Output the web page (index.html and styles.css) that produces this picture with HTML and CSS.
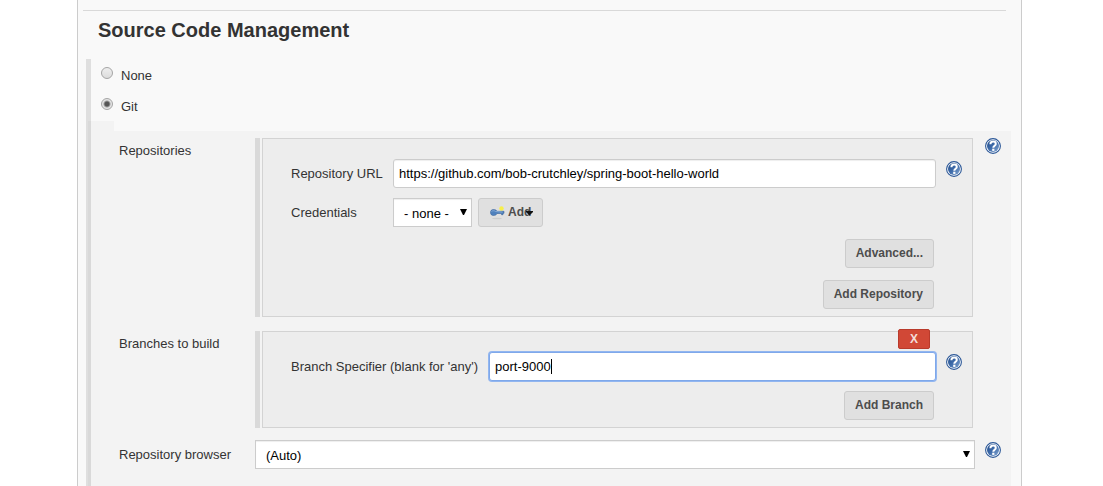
FILE: index.html
```html
<!DOCTYPE html>
<html lang="en">
<head>
<meta charset="utf-8">
<title>Source Code Management</title>
<link rel="stylesheet" href="styles.css">
</head>
<body>
<svg class="defs" aria-hidden="true">
  <defs>
    <linearGradient id="blue" x1="0" y1="0" x2="1" y2="1">
      <stop offset="0" stop-color="#204a87"/>
      <stop offset="0.5" stop-color="#3f6cab"/>
      <stop offset="1" stop-color="#88a8d0"/>
    </linearGradient>
    <symbol id="help" viewBox="0 0 16 16">
      <circle cx="8" cy="8" r="7.4" fill="#fff" stroke="#2b5797" stroke-width="1.1"/>
      <circle cx="8" cy="8" r="6" fill="url(#blue)"/>
      <path d="M5.400 6.200C5.400 4.300 6.500 3.600 8.100 3.600c1.700 0 2.700.9 2.700 2.300 0 1.700-2.500 1.900-2.500 3.800" fill="none" stroke="#fff" stroke-width="2"/>
      <rect x="7.200" y="10.700" width="2.200" height="2.200" fill="#fff"/>
    </symbol>
    <symbol id="arrow" viewBox="0 0 7 6">
      <path d="M0 0h7L4 6H3z" fill="#000"/>
    </symbol>
  </defs>
</svg>
<main class="config">
  <hr class="rule">
  <h1 class="title">Source Code Management</h1>
  <form class="scm">
    <label class="choice"><input class="radio" type="radio" name="scm"><span>None</span></label>
    <label class="choice"><input class="radio" type="radio" name="scm" checked><span>Git</span></label>
    <div class="git">
      <div class="tab"></div>
      <div class="settings">
        <section class="setting">
          <h2 class="name">Repositories</h2>
          <div class="repeat">
            <div class="box box-repo">
              <div class="field">
                <label class="caption" for="url">Repository URL</label>
                <input class="text" id="url" type="text" value="https://github.com/bob-crutchley/spring-boot-hello-world">
                <button class="help" type="button" aria-label="Help for Repository URL"><svg><use href="#help"/></svg></button>
              </div>
              <div class="field">
                <label class="caption" for="credentials">Credentials</label>
                <div class="credentials">
                  <div class="pick pick-small">
                    <select class="select" id="credentials"><option>- none -</option></select>
                    <svg class="arrow"><use href="#arrow"/></svg>
                  </div>
                  <button class="button add" type="button">
                    <svg class="key" viewBox="0 0 16 16">
                      <ellipse cx="8" cy="14.500" rx="5" ry=".8" fill="#cdcdcd"/>
                      <circle cx="12.500" cy="4.500" r="2.200" fill="#f7ef4a"/>
                      <path d="M4.500 5.500c2 0 3 .8 3.500 1.800H15v2h-1v1.400h-1.500V9.500H8C7.500 10.800 6.300 11.500 4.500 11.500 2.400 11.500 1.500 10.200 1.500 8.500s.9-3 3-3z" fill="#4f81bd" stroke="#3b659c" stroke-width=".6"/>
                      <path d="M2.500 7.500c1-1 3-1 4 0l7 .6" fill="none" stroke="#86aad6"/>
                    </svg>
                    <span>Add</span>
                    <svg class="menu" viewBox="0 0 7 6"><path d="M0 1h7v1L4 5H3L0 2z" fill="#111"/></svg>
                  </button>
                </div>
              </div>
              <div class="actions"><button class="button" type="button">Advanced...</button></div>
              <div class="actions"><button class="button" type="button">Add Repository</button></div>
            </div>
          </div>
          <button class="help" type="button" aria-label="Help for Repositories"><svg><use href="#help"/></svg></button>
        </section>
        <section class="setting">
          <h2 class="name">Branches to build</h2>
          <div class="repeat">
            <div class="box box-branch">
              <button class="delete" type="button">X</button>
              <div class="field field-wide">
                <label class="caption" for="branch">Branch Specifier (blank for 'any')</label>
                <div class="editing">
                  <input class="text text-focus" id="branch" type="text" value="port-9000">
                  <span class="caret"></span>
                </div>
                <button class="help" type="button" aria-label="Help for Branch Specifier"><svg><use href="#help"/></svg></button>
              </div>
              <div class="actions"><button class="button" type="button">Add Branch</button></div>
            </div>
          </div>
        </section>
        <section class="setting">
          <label class="name" for="browser">Repository browser</label>
          <div class="pick pick-wide">
            <select class="select" id="browser"><option>(Auto)</option></select>
            <svg class="arrow"><use href="#arrow"/></svg>
          </div>
          <button class="help help-low" type="button" aria-label="Help for Repository browser"><svg><use href="#help"/></svg></button>
        </section>
      </div>
    </div>
  </form>
</main>
</body>
</html>
```
FILE: styles.css
```css
* { box-sizing: border-box; }

body {
  margin: 0;
  background: #fff;
  color: #333;
  font: 13px/18px "Liberation Sans", Arial, sans-serif;
}

.defs { position: absolute; width: 0; height: 0; }

.config {
  display: flex;
  flex-direction: column;
  min-height: 100vh;
  margin: 0 81px 0 77px;
  padding-top: 10px;
  border: solid #ccc;
  border-width: 0 1px;
  background: #f9f9f9;
}

.rule {
  align-self: stretch;
  height: 1px;
  margin: 0 15px 0 5px;
  border: 0;
  background: #d9d9d9;
}

.title {
  margin: 7px 20px 17px;
  font-size: 20px;
  line-height: 24px;
}

.scm {
  display: flex;
  flex: 1;
  flex-direction: column;
  margin: 0 10px 0 8px;
  border-left: 5px solid #dfdfdf;
}

.choice {
  display: flex;
  gap: 8px;
  height: 31px;
  padding: 8px 0 0 10px;
}

.radio {
  appearance: none;
  width: 12px;
  height: 12px;
  margin: 0;
  border: 1px solid #a5a5a5;
  border-radius: 50%;
  background: linear-gradient(#eee, #dcdcdc);
}

.radio:checked { background: radial-gradient(circle, #555 0 2px, #e4e4e4 4px); }

.git {
  display: flex;
  flex: 1;
  flex-direction: column;
  margin-left: -3px;
  border-left: 3px solid #d9d9d9;
}

.tab { width: 23px; height: 10px; background: #f3f3f3; }

.settings {
  display: flex;
  flex: 1;
  flex-direction: column;
  gap: 14px;
  padding: 7px 10px 17px 28px;
  background: #f3f3f3;
}

.setting {
  display: grid;
  grid-template-columns: 136px 1fr 16px;
  align-items: start;
}

.setting:last-child { margin-top: -2px; }

.name {
  margin: 0;
  padding-top: 4px;
  font-size: 13px;
  font-weight: normal;
}

.setting:last-child .name { padding-top: 6px; }

.repeat {
  margin-right: 12px;
  padding-left: 2px;
  border-left: 5px solid #d9d9d9;
}

.box {
  position: relative;
  display: flex;
  flex-direction: column;
  gap: 10px;
  padding: 20px 10px 7px 28px;
  border: 1px solid #d3d3d3;
  background: #ededed;
}

.box-repo .actions { margin-top: 2px; }

.field {
  display: grid;
  grid-template-columns: 102px 1fr 16px;
  align-items: start;
}

.field-wide { grid-template-columns: 198px 1fr 16px; }

.caption { padding-top: 6px; }

.text {
  display: block;
  height: 29px;
  margin-right: 10px;
  padding: 0 5px;
  border: 1px solid #ccc;
  border-radius: 3px;
  outline: 0;
  background: #fff;
  box-shadow: inset 0 1px 1px #eee;
  color: #000;
  font: inherit;
}

.text-focus {
  width: 100%;
  margin-right: 0;
  border-color: #7fa8ea;
  box-shadow: 0 0 0 1px #92b6f0;
}

.editing { position: relative; margin-right: 10px; }

.caret {
  position: absolute;
  top: 7px;
  left: 62px;
  width: 1px;
  height: 15px;
  background: #000;
}

.help {
  display: block;
  width: 16px;
  height: 16px;
  padding: 0;
  border: 0;
  background: none;
}

.help svg { display: block; width: 16px; height: 16px; }
.field .help, .help-low { margin-top: 2px; }

.credentials { display: flex; gap: 6px; margin-right: 10px; }

.pick { position: relative; }
.pick-small { width: 79px; }
.pick-wide { margin-right: 10px; }

.select {
  appearance: none;
  display: block;
  width: 100%;
  height: 29px;
  padding: 2px 10px 0;
  border: 1px solid #ccc;
  border-radius: 0;
  background: #fff;
  box-shadow: inset 0 1px 1px #eee;
  color: #000;
  font: inherit;
}

.arrow {
  position: absolute;
  top: 11px;
  right: 5px;
  width: 7px;
  height: 6px;
  pointer-events: none;
}

.button {
  height: 29px;
  padding: 0 10px 2px;
  border: 1px solid #ccc;
  border-radius: 3px;
  background: #e0e0e0;
  color: #4d4d4d;
  font: bold 12px/18px "Liberation Sans", Arial, sans-serif;
}

.add {
  position: relative;
  display: flex;
  gap: 3px;
  align-items: center;
  width: 65px;
}

.key { flex: none; width: 16px; height: 16px; }

.menu {
  position: absolute;
  top: 11px;
  right: 9px;
  width: 7px;
  height: 6px;
}

.actions { display: flex; justify-content: flex-end; padding-right: 28px; }

.delete {
  position: absolute;
  top: -3px;
  right: 42px;
  width: 32px;
  height: 20px;
  padding: 0;
  border: 1px solid #b93a2b;
  border-radius: 2px;
  background: #d14836;
  color: #f4dedb;
  font: bold 12px/18px "Liberation Sans", Arial, sans-serif;
}
```
